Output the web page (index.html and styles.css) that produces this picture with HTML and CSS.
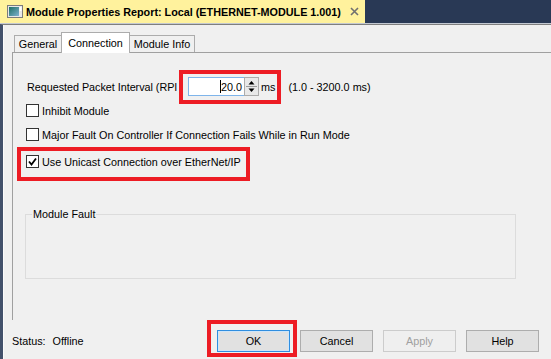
FILE: index.html
```html
<!DOCTYPE html>
<html>
<head>
<meta charset="utf-8">
<link rel="stylesheet" href="styles.css">
</head>
<body>
<div class="window">
  <div class="titlebar">
    <div class="doctab">
      <svg class="appicon" viewBox="0 0 16 13" width="16" height="13">
        <defs>
          <linearGradient id="g1" x1="0" y1="0" x2="1" y2="1">
            <stop offset="0" stop-color="#1d6f63"/>
            <stop offset="1" stop-color="#7fb2d0"/>
          </linearGradient>
        </defs>
        <rect x="0.5" y="0.5" width="15" height="12" fill="#e8e8e8" stroke="#7c7c7c"/>
        <rect x="2" y="2" width="10" height="9" fill="url(#g1)"/>
        <rect x="12.5" y="2" width="2" height="4" fill="#ffffff"/>
      </svg>
      <span class="title">Module Properties Report: Local (ETHERNET-MODULE 1.001)</span>
      <svg class="close" viewBox="0 0 9 9" width="9" height="9">
        <path d="M1 1 L8 8 M8 1 L1 8" stroke="#707070" stroke-width="1.6"/>
      </svg>
    </div>
  </div>
  <div class="frame">
    <div class="tabstrip">
      <div class="tab tab-general">General</div>
      <div class="tab tab-conn">Connection</div>
      <div class="tab tab-info">Module Info</div>
    </div>
    <div class="tabpage">
      <div class="rpi">
        <span class="label">Requested Packet Interval (RPI<span class="paren">)</span></span>
        <div class="input"><span class="caret"></span>20.0</div>
        <div class="spinbtn">
          <svg viewBox="0 0 13 17" width="13" height="17">
            <path d="M3.5 6.5 L6.5 3 L9.5 6.5 Z" fill="#000"/>
            <path d="M1 8.5 H12" stroke="#9a9a9a" stroke-width="1"/>
            <path d="M3.5 10.5 L6.5 14 L9.5 10.5 Z" fill="#000"/>
          </svg>
        </div>
        <span class="unit">ms</span>
        <span class="range">(1.0 - 3200.0 ms)</span>
      </div>
      <div class="check check-inhibit"><span class="box"></span>Inhibit Module</div>
      <div class="check check-major"><span class="box"></span>Major Fault On Controller If Connection Fails While in Run Mode</div>
      <div class="check check-unicast"><span class="box"><svg viewBox="0 0 11 11" width="11" height="11"><path d="M2 5.5 L4.5 8.5 L9 2.5" fill="none" stroke="#000" stroke-width="1.8"/></svg></span>Use Unicast Connection over EtherNet/IP</div>
      <fieldset class="group">
        <legend>Module Fault</legend>
      </fieldset>
    </div>
    <div class="footer">
      <span class="status">Status:</span><span class="status-val">Offline</span>
      <div class="buttons">
        <div class="btn btn-default">OK</div>
        <div class="btn">Cancel</div>
        <div class="btn btn-disabled">Apply</div>
        <div class="btn">Help</div>
      </div>
    </div>
  </div>
  <div class="mark mark-rpi"></div>
  <div class="mark mark-unicast"></div>
  <div class="mark mark-ok"></div>
</div>
</body>
</html>
```
FILE: styles.css
```css
body {
  margin: 0;
  background: #f0f0f0;
}

.window {
  position: relative;
  width: 551px;
  height: 359px;
  display: flex;
  flex-direction: column;
  background: #f0f0f0;
  font-family: "Liberation Sans", Arial, sans-serif;
  font-size: 10.8px;
  color: #000;
  overflow: hidden;
}

/* title bar */
.titlebar {
  flex: none;
  height: 23px;
  display: flex;
  background: #293955;
  border-bottom: 1px solid #c3c9d2;
}

.doctab {
  width: 365px;
  display: flex;
  align-items: center;
  box-sizing: border-box;
  padding-left: 7px;
  background: #fff29d;
}

.appicon {
  flex: none;
  margin-right: 3px;
}

.title {
  font-weight: bold;
  font-size: 10.8px;
  white-space: nowrap;
}

.close {
  margin-left: auto;
  margin-right: 6px;
}

/* frame */
.frame {
  flex: 1;
  min-height: 0;
  display: flex;
  flex-direction: column;
  border-top: 1px solid #7f7f7f;
  border-left: 3px solid #43516b;
  box-shadow: inset 1px 0 0 #fbfbfb;
}

.tabstrip {
  display: flex;
  align-items: flex-end;
  height: 20px;
  padding: 7px 0 0 11px;
}

.tab {
  height: 17px;
  box-sizing: border-box;
  border: 1px solid #acacac;
  border-bottom: none;
  background: #f0f0f0;
  display: flex;
  align-items: center;
  justify-content: center;
  white-space: nowrap;
}

.tab-general {
  width: 48px;
}

.tab-conn {
  position: relative;
  z-index: 1;
  width: 69px;
  height: 21px;
  margin-left: -1px;
  margin-bottom: -1px;
  padding-bottom: 1px;
  background: #ffffff;
}

.tab-info {
  width: 66px;
  margin-left: -1px;
}

.tabpage {
  height: 268px;
  box-sizing: border-box;
  margin-left: 9px;
  border-top: 1px solid #a0a0a0;
  border-left: 1px solid #a0a0a0;
  padding: 24px 0 0 13px;
}

/* RPI row */
.rpi {
  display: flex;
  align-items: center;
  height: 19px;
}

.label {
  width: 162px;
  flex: none;
  padding-left: 1px;
  box-sizing: border-box;
  white-space: nowrap;
  letter-spacing: -0.03px;
}

.paren {
  margin-left: 2px;
}

.input {
  width: 57px;
  height: 19px;
  box-sizing: border-box;
  border: 1px solid #7eb4ea;
  background: #ffffff;
  display: flex;
  align-items: center;
  justify-content: flex-end;
  padding-right: 2px;
}

.caret {
  width: 1px;
  height: 13px;
  background: #000;
}

.spinbtn {
  width: 15px;
  height: 19px;
  box-sizing: border-box;
  margin-left: -1px;
  border: 1px solid #acacac;
  background: #e9e9e9;
  display: flex;
}

.unit {
  margin-left: 2px;
}

.range {
  margin-left: 13px;
}

/* checkboxes */
.check {
  display: flex;
  align-items: center;
  height: 13px;
  white-space: nowrap;
}

.box {
  flex: none;
  width: 13px;
  height: 13px;
  box-sizing: border-box;
  border: 1px solid #333333;
  background: #ffffff;
  margin-right: 3px;
  display: flex;
  align-items: center;
  justify-content: center;
}

.check-inhibit {
  margin-top: 8px;
}

.check-major {
  margin-top: 11px;
}

.check-unicast {
  margin-top: 14px;
}

/* group box */
.group {
  width: 491px;
  height: 71px;
  box-sizing: border-box;
  margin: 40px 0 0 -1px;
  padding: 0;
  border: 1px solid #dcdcdc;
}

.group legend {
  margin-left: 6px;
  padding: 0 1px;
  line-height: 13px;
}

/* footer */
.footer {
  display: flex;
  align-items: center;
  padding: 10px 12px 0 9px;
}

.status-val {
  margin-left: 7px;
}

.buttons {
  margin-left: auto;
  display: flex;
  gap: 10px;
}

.btn {
  width: 73px;
  height: 22px;
  box-sizing: border-box;
  border: 1px solid #adadad;
  background: #e1e1e1;
  display: flex;
  align-items: center;
  justify-content: center;
}

.btn-default {
  border-color: #2f8ee0;
  box-shadow: inset 0 0 0 1px #cfe5f8;
}

.btn-disabled {
  background: #efefef;
  border-color: #cccccc;
  color: #a0a0a0;
}

/* red annotation boxes over the dialog */
.mark {
  position: absolute;
  box-sizing: border-box;
  border: 4px solid #ed1c24;
  pointer-events: none;
}

.mark-rpi {
  left: 179px;
  top: 70px;
  width: 102px;
  height: 34px;
}

.mark-unicast {
  left: 17px;
  top: 147px;
  width: 233px;
  height: 34px;
}

.mark-ok {
  left: 207px;
  top: 320px;
  width: 90px;
  height: 37px;
}
```
